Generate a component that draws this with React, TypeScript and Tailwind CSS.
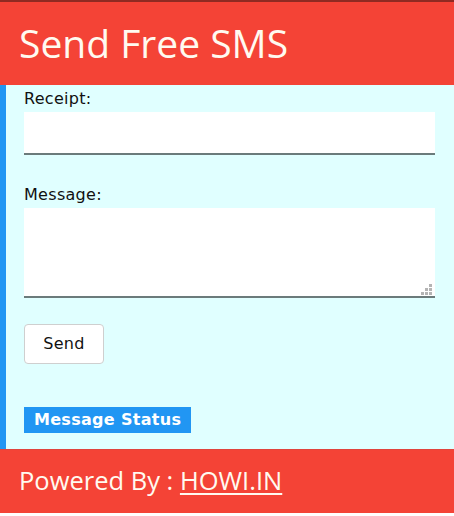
import React from "react";

export default function App() {
  return (
    <div className="w-[454px] h-[516px] bg-white overflow-hidden">
      <header className="h-[85px] bg-[#f44336] border-t-2 border-[#8f2a22] flex items-center pl-[19px] pb-[2px]">
        <h1 className="text-[39px] leading-none text-[#fffaf0] font-['Open_Sans',sans-serif]">
          Send Free SMS
        </h1>
      </header>
      <main className="h-[364px] bg-[#e0ffff] border-l-[6px] border-[#2196f3] pl-[18px] pr-[19px] pt-[2px] font-['DejaVu_Sans',Verdana,sans-serif] text-[16px] leading-[24px] tracking-[0.3px] text-[#111]">
        <label className="block">Receipt:</label>
        <input
          type="text"
          className="mt-[1px] block w-full h-[43px] bg-white border-b-2 border-[#6b7b7b] outline-none px-2"
        />
        <label className="block mt-[28px]">Message:</label>
        <div className="relative mt-[1px]">
          <textarea className="block w-full h-[90px] bg-white border-b-2 border-[#6b7b7b] outline-none resize-none px-2" />
          <svg
            className="absolute right-[3px] bottom-[3px]"
            width="11"
            height="11"
            viewBox="0 0 11 11"
          >
            <rect x="8" y="0" width="3" height="3" fill="#b4b4b4" />
            <rect x="4" y="4" width="3" height="3" fill="#b4b4b4" />
            <rect x="8" y="4" width="3" height="3" fill="#b4b4b4" />
            <rect x="0" y="8" width="3" height="3" fill="#b4b4b4" />
            <rect x="4" y="8" width="3" height="3" fill="#b4b4b4" />
            <rect x="8" y="8" width="3" height="3" fill="#b4b4b4" />
          </svg>
        </div>
        <button className="mt-[26px] block w-[80px] h-[40px] bg-white border border-[#cfcfcf] rounded-[4px] text-[16px] text-[#111]">
          Send
        </button>
        <div className="mt-[43px] inline-block bg-[#2196f3] px-[10px] h-[26px] leading-[26px] font-bold text-white">
          Message Status
        </div>
      </main>
      <footer className="h-[64px] bg-[#f44336] border-t border-[#e0443c] flex items-center pl-[19px] pb-[2px] font-['Open_Sans',sans-serif] text-[25.5px] leading-none text-[#fffaf0]">
        <span>Powered By :&nbsp;</span>
        <a href="#" className="underline underline-offset-[3px] decoration-[2px]">
          HOWI.IN
        </a>
      </footer>
    </div>
  );
}
